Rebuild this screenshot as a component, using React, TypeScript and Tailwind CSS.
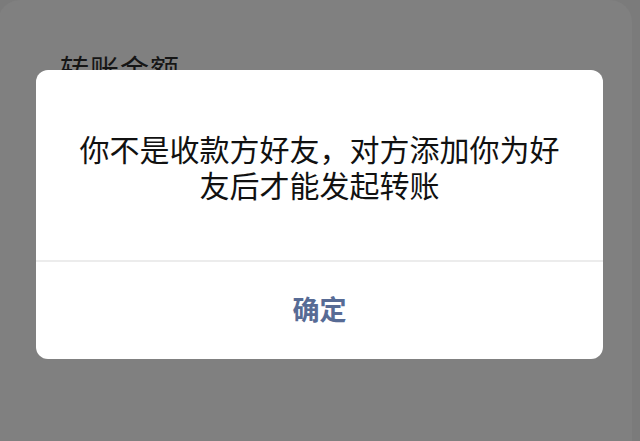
export default function App() {
  return (
    <div
      className="relative w-[640px] h-[441px] overflow-hidden bg-[#7b7b7b]"
      style={{ fontFamily: '"Noto Sans CJK SC", "Noto Sans", sans-serif' }}
    >
      {/* page underneath the mask */}
      <div className="ml-[-2px] mr-[8px] h-full rounded-t-[22px] bg-[#808080] pt-[50px] pl-[62px]">
        <div className="text-[29px] leading-[36px] tracking-[1px] text-[#151515]">转账金额</div>
      </div>

      {/* alert dialog */}
      <div className="absolute left-[36px] top-[70px] w-[567px] h-[289px] rounded-[12px] bg-white flex flex-col">
        <div className="h-[190px] flex items-center justify-center px-[40px] pt-[2px]">
          <p className="text-center text-[30px] leading-[36px] text-[#111111]">
            你不是收款方好友，对方添加你为好友后才能发起转账
          </p>
        </div>
        <div className="h-[2px] bg-[#ececec]" />
        <button className="flex-1 flex items-center justify-center pb-[2px] text-[27px] font-bold text-[#576b95]">
          确定
        </button>
      </div>
    </div>
  );
}
